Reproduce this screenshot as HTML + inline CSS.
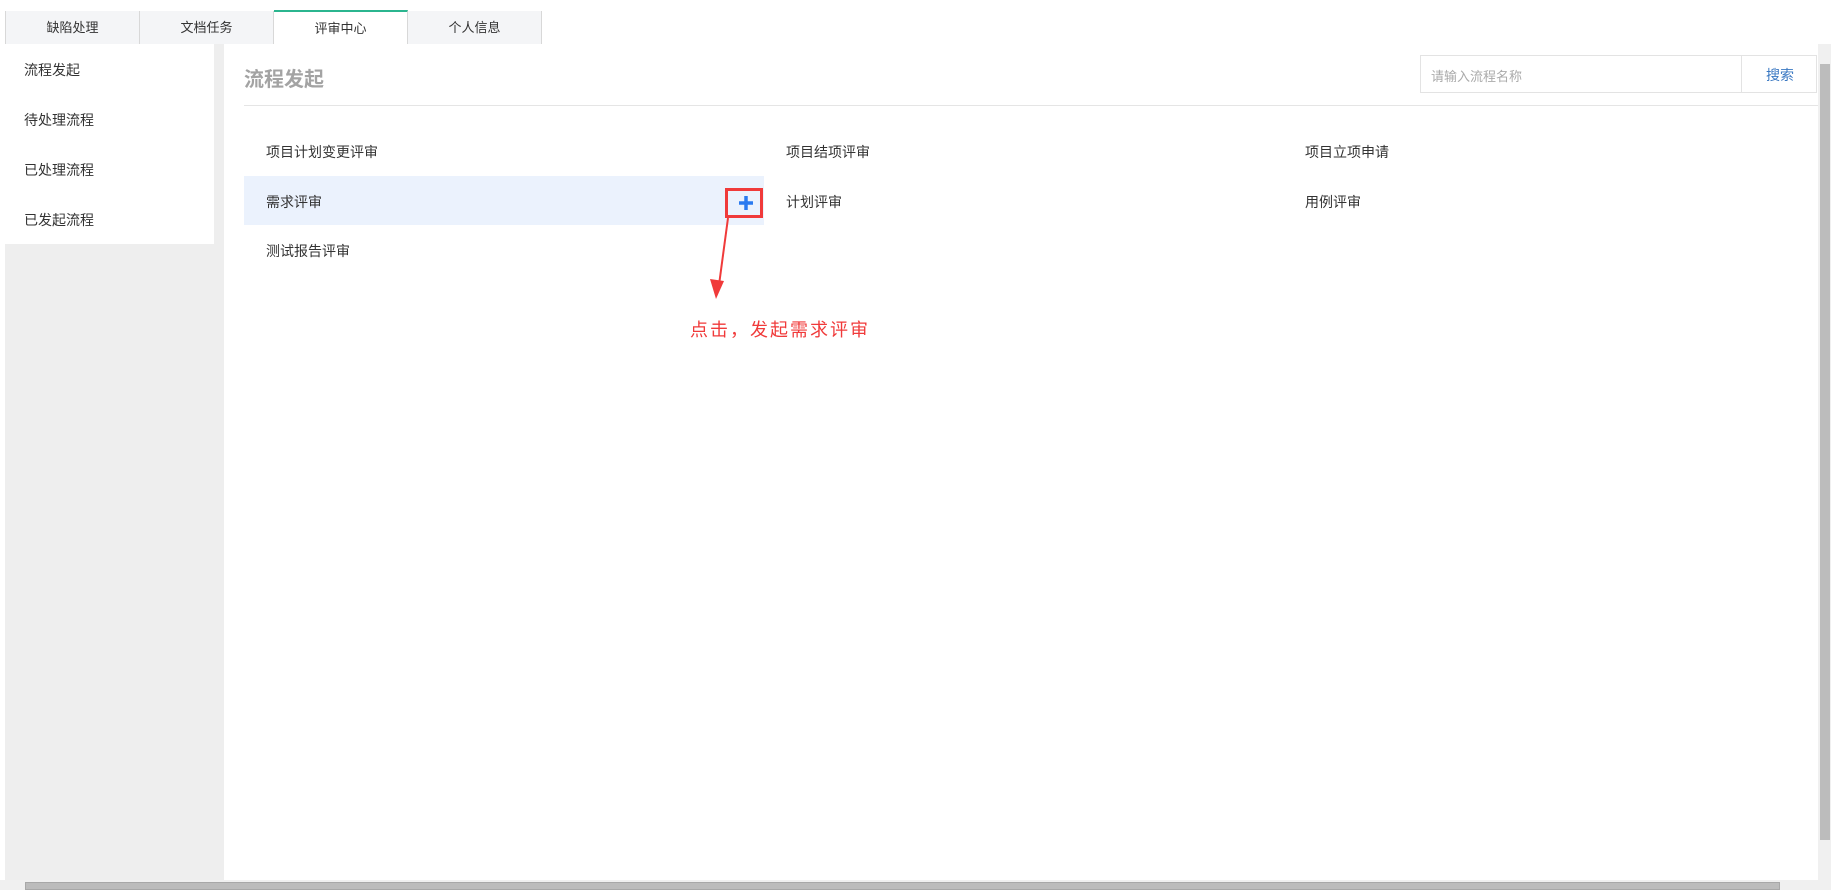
<!DOCTYPE html>
<html><head><meta charset="utf-8"><style>
body{margin:0;width:1831px;height:890px;background:#fff;position:relative;overflow:hidden;font-family:"Liberation Sans","Noto Sans CJK SC",sans-serif;color:#333}
.a{position:absolute}
.tab{position:absolute;top:11px;height:33px;width:133px;background:#f4f5f7;border-right:1px solid #d8d8d8;font-size:13px;line-height:33px;text-align:center;color:#333}
.side{font-size:14px;left:24px}
.item{font-size:14px;position:absolute}
</style></head><body>
<div class="a" style="left:5px;top:11px;width:1px;height:33px;background:#d8d8d8"></div>
<div class="tab" style="left:6px">缺陷处理</div>
<div class="tab" style="left:140px">文档任务</div>
<div class="tab" style="left:274px;background:#fff;border-top:2px solid #2bb58f;top:10px;height:32px">评审中心</div>
<div class="tab" style="left:408px">个人信息</div>
<div class="a" style="left:5px;top:44px;width:219px;height:836px;background:#eee"></div>
<div class="a" style="left:5px;top:44px;width:209px;height:200px;background:#fff"></div>
<div class="a side" style="top:60px">流程发起</div>
<div class="a side" style="top:110px">待处理流程</div>
<div class="a side" style="top:160px">已处理流程</div>
<div class="a side" style="top:210px">已发起流程</div>
<div class="a" style="left:244px;top:63px;font-size:20px;font-weight:bold;color:#a3a3a3">流程发起</div>
<div class="a" style="left:244px;top:105px;width:1574px;height:1px;background:#e5e5e5"></div>
<div class="a" style="left:1420px;top:55px;width:397px;height:38px;border:1px solid #e3e3e3;box-sizing:border-box"></div>
<div class="a" style="left:1741px;top:55px;width:1px;height:38px;background:#e3e3e3"></div>
<div class="a" style="left:1431px;top:66px;font-size:13px;color:#aaa">请输入流程名称</div>
<div class="a" style="left:1766px;top:65px;font-size:14px;color:#3a78c2">搜索</div>
<div class="a" style="left:244px;top:176px;width:520px;height:49px;background:#ebf2fd"></div>
<div class="item" style="left:266px;top:142px">项目计划变更评审</div>
<div class="item" style="left:786px;top:142px">项目结项评审</div>
<div class="item" style="left:1305px;top:142px">项目立项申请</div>
<div class="item" style="left:266px;top:192px">需求评审</div>
<div class="item" style="left:786px;top:192px">计划评审</div>
<div class="item" style="left:1305px;top:192px">用例评审</div>
<div class="item" style="left:266px;top:241px">测试报告评审</div>
<div class="a" style="left:725px;top:188px;width:38px;height:30px;border:3px solid #f03a3a;box-sizing:border-box"></div>
<svg class="a" style="left:0;top:0" width="1831" height="890">
<path d="M746 196v14M739 203h14" stroke="#2a7af0" stroke-width="3.5"/>
<path d="M728 218L719 285" stroke="#f03a3a" stroke-width="2"/>
<path d="M710 279L716 299L724 281Z" fill="#f03a3a"/>
</svg>
<div class="a" style="left:690px;top:316px;font-size:18px;letter-spacing:2px;color:#f03a3a">点击，发起需求评审</div>
<div class="a" style="left:1818px;top:44px;width:13px;height:836px;background:#f0f0f0"></div>
<div class="a" style="left:1820px;top:64px;width:10px;height:776px;background:#bcbcbc"></div>
<div class="a" style="left:0;top:880px;width:1831px;height:10px;background:#f0f0f0"></div>
<div class="a" style="left:25px;top:882px;width:1755px;height:8px;background:#bcbcbc;border:1px solid #a8a8a8;box-sizing:border-box"></div>
</body></html>
